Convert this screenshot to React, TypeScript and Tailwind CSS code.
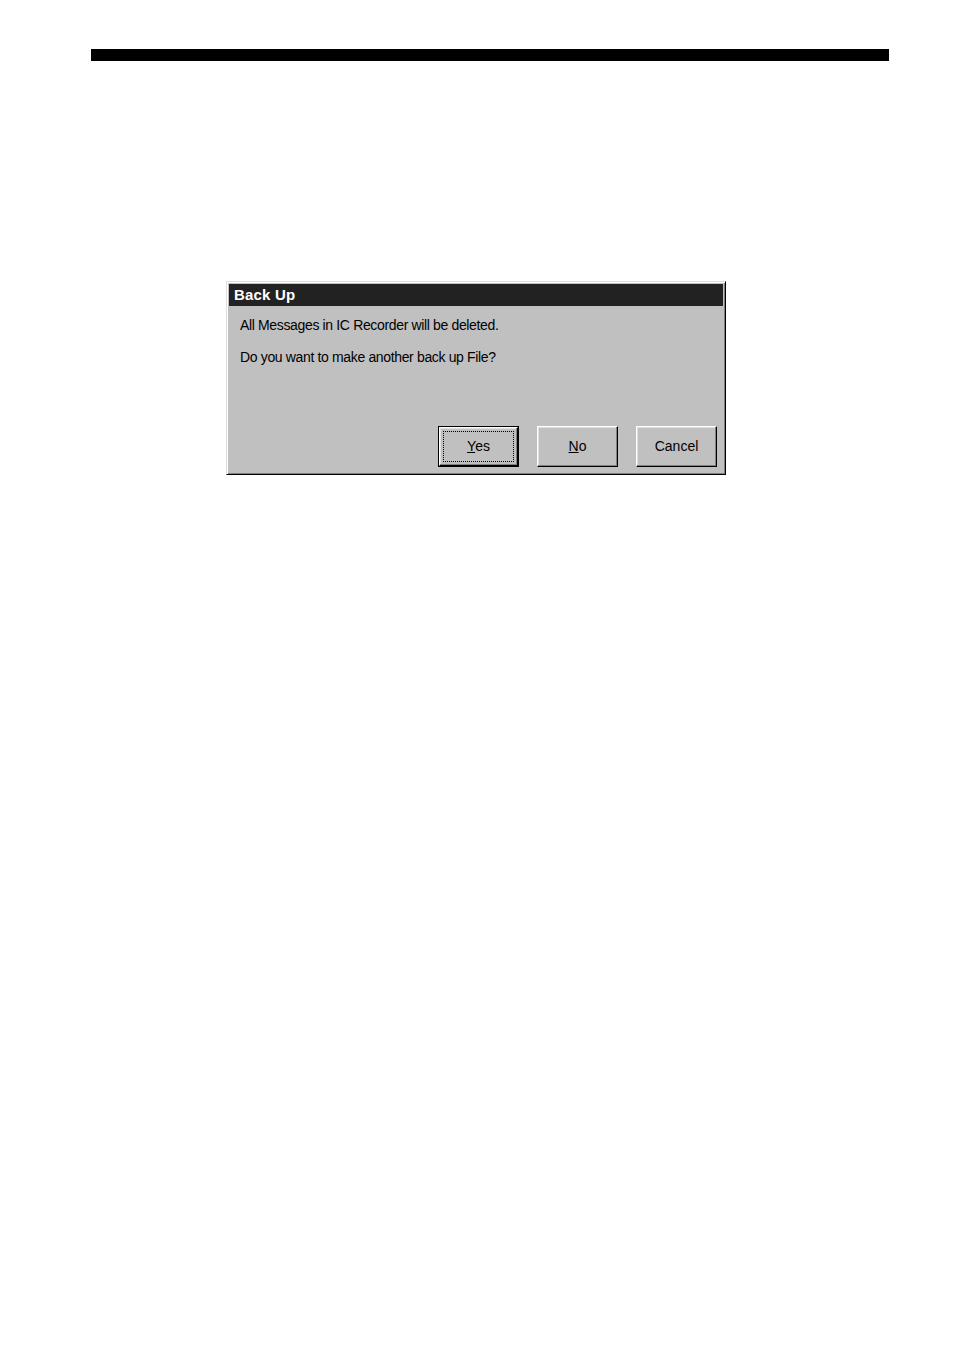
function Btn({ children, isDefault }: { children: React.ReactNode; isDefault?: boolean }) {
  const inner = (
    <div className="flex h-full w-full items-center justify-center border-t border-l border-t-white border-l-white border-r border-b border-r-black border-b-black bg-[#c0c0c0] shadow-[inset_-1px_-1px_0_#808080,inset_1px_1px_0_#dfdfdf]">
      {isDefault ? (
        <div className="flex h-[31px] w-[71px] items-center justify-center border border-dotted border-black">
          {children}
        </div>
      ) : (
        children
      )}
    </div>
  );
  return (
    <div className={`h-[41px] w-[81px] text-[14px] text-black ${isDefault ? 'border border-black' : ''}`}>
      {inner}
    </div>
  );
}

export default function App() {
  return (
    <div className="min-h-[1345px] bg-white pt-[49px] font-['Liberation_Sans',Arial,sans-serif]">
      <div className="ml-[91px] h-[12px] w-[798px] bg-black" />

      {/* Dialog */}
      <div className="ml-[226px] mt-[220px] flex h-[194px] w-[500px] flex-col border-t border-l border-t-[#dfdfdf] border-l-[#dfdfdf] border-r border-b border-r-black border-b-black bg-[#c0c0c0] shadow-[inset_1px_1px_0_#ffffff,inset_-1px_-1px_0_#808080] p-[2px]">
        <div className="flex h-[22px] items-center bg-[#222222] pl-[5px] text-[15px] font-bold tracking-[0.2px] text-white">
          Back Up
        </div>
        <div className="flex flex-1 flex-col px-[11px] pt-[11px] text-[14px] tracking-[-0.35px] text-black">
          <p className="h-[16px] leading-[16px]">All Messages in IC Recorder will be deleted.</p>
          <p className="mt-[16px] h-[16px] leading-[16px]">Do you want to make another back up File?</p>
          <div className="mt-auto mb-[5px] mr-[-5px] flex justify-end gap-[18px] tracking-normal">
            <Btn isDefault>
              <span>
                <span className="underline">Y</span>es
              </span>
            </Btn>
            <Btn>
              <span>
                <span className="underline">N</span>o
              </span>
            </Btn>
            <Btn>Cancel</Btn>
          </div>
        </div>
      </div>
    </div>
  );
}
